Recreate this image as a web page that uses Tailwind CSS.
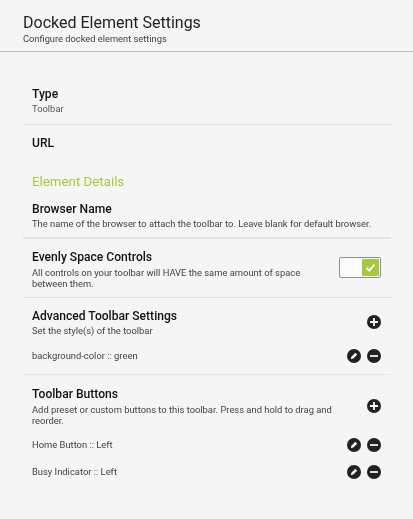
<!DOCTYPE html>
<html>
<head>
<meta charset="utf-8">
<script src="https://cdn.jsdelivr.net/npm/@tailwindcss/browser@4"></script>
</head>
<body class="m-0 bg-[#f5f5f5]">
<div class="w-[413px] h-[519px] overflow-hidden bg-[#f5f5f5] font-['Roboto',sans-serif] text-[#111] blur-[0.4px]">
  <header class="h-[52px] pl-[23px] pt-[13px] border-b border-[#bdbdbd]">
    <h1 class="text-[16px] leading-[19px] font-normal text-[#212121]">Docked Element Settings</h1>
    <p class="text-[9.3px] leading-[13px] text-[#424242]">Configure docked element settings</p>
  </header>
  <main class="pt-[35px] pl-[23px] w-[391px]">
    <section class="pl-[9px] h-[38px] border-b border-[#dedede]">
      <h2 class="text-[12.1px] leading-[15px] font-medium">Type</h2>
      <p class="text-[9.4px] leading-[14px] text-[#555]">Toolbar</p>
    </section>
    <section class="pl-[9px] pt-[11px] h-[40px]">
      <h2 class="text-[12.1px] leading-[15px] font-medium">URL</h2>
    </section>
    <section class="pl-[9px] pt-[7px]">
      <h3 class="text-[13.3px] leading-[20px] font-normal text-[#a4c93c]">Element Details</h3>
    </section>
    <section class="pl-[9px] pt-[10px] h-[47px] border-b-2 border-[#e6e6e6]">
      <h2 class="text-[12.1px] leading-[15px] font-medium">Browser Name</h2>
      <p class="text-[9.4px] leading-[14px] text-[#424242] whitespace-nowrap">The name of the browser to attach the toolbar to. Leave blank for default browser.</p>
    </section>
    <section class="pl-[9px] pt-[11px] h-[59px] border-b border-[#dedede] flex justify-between">
      <div class="w-[285px]">
        <h2 class="text-[12.1px] leading-[15px] font-medium">Evenly Space Controls</h2>
        <p class="text-[9.4px] leading-[11px] text-[#424242] mt-[2px]">All controls on your toolbar will HAVE the same amount of space between them.</p>
      </div>
      <div class="w-[42px] h-[21px] mt-[7px] mr-[10px] border border-[#8f8f8f] bg-[#fbfbfb] rounded-[2px] flex justify-end p-px">
        <div class="w-[17px] h-[17px] bg-[#a4c93c] rounded-[1px] flex items-center justify-center">
          <svg width="13" height="13" viewBox="0 0 13 13"><path d="M2.5 7l2.8 2.6L10.5 3.6" fill="none" stroke="#fff" stroke-width="2"/></svg>
        </div>
      </div>
    </section>
    <section class="pl-[9px] pr-[10px] pt-[11px] flex justify-between">
      <div>
        <h2 class="text-[12.1px] leading-[15px] font-medium">Advanced Toolbar Settings</h2>
        <p class="text-[9.4px] leading-[14px] text-[#424242]">Set the style(s) of the toolbar</p>
      </div>
      <svg class="mt-[6px]" width="14" height="14" viewBox="0 0 14 14"><circle cx="7" cy="7" r="7" fill="#212121"/><path d="M7 3v8M3 7h8" stroke="#f5f5f5" stroke-width="1.8"/></svg>
    </section>
    <div class="pl-[9px] pr-[10px] mt-[8px] h-[20px] flex justify-between items-center text-[9.4px] text-[#424242]">
      <span>background-color :: green</span>
      <div class="flex gap-[6px]">
        <svg width="14" height="14" viewBox="0 0 14 14"><circle cx="7" cy="7" r="7" fill="#212121"/><path d="M3.8 10.2l.6-2.5 3.9-3.9 1.9 1.9-3.9 3.9z" fill="#f5f5f5"/></svg>
        <svg width="14" height="14" viewBox="0 0 14 14"><circle cx="7" cy="7" r="7" fill="#212121"/><path d="M3 7h8" stroke="#f5f5f5" stroke-width="1.8"/></svg>
      </div>
    </div>
    <div class="border-b border-[#e6e6e6] mt-[8px]"></div>
    <section class="pl-[9px] pr-[10px] pt-[12px] flex justify-between">
      <div class="w-[312px]">
        <h2 class="text-[12.1px] leading-[15px] font-medium">Toolbar Buttons</h2>
        <p class="text-[9.4px] leading-[11px] text-[#424242] mt-[2px]">Add preset or custom buttons to this toolbar. Press and hold to drag and reorder.</p>
      </div>
      <svg class="mt-[12px]" width="14" height="14" viewBox="0 0 14 14"><circle cx="7" cy="7" r="7" fill="#212121"/><path d="M7 3v8M3 7h8" stroke="#f5f5f5" stroke-width="1.8"/></svg>
    </section>
    <div class="pl-[9px] pr-[10px] mt-[9px] h-[20px] flex justify-between items-center text-[9.4px] text-[#424242]">
      <span>Home Button :: Left</span>
      <div class="flex gap-[6px]">
        <svg width="14" height="14" viewBox="0 0 14 14"><circle cx="7" cy="7" r="7" fill="#212121"/><path d="M3.8 10.2l.6-2.5 3.9-3.9 1.9 1.9-3.9 3.9z" fill="#f5f5f5"/></svg>
        <svg width="14" height="14" viewBox="0 0 14 14"><circle cx="7" cy="7" r="7" fill="#212121"/><path d="M3 7h8" stroke="#f5f5f5" stroke-width="1.8"/></svg>
      </div>
    </div>
    <div class="pl-[9px] pr-[10px] mt-[7px] h-[20px] flex justify-between items-center text-[9.4px] text-[#424242]">
      <span>Busy Indicator :: Left</span>
      <div class="flex gap-[6px]">
        <svg width="14" height="14" viewBox="0 0 14 14"><circle cx="7" cy="7" r="7" fill="#212121"/><path d="M3.8 10.2l.6-2.5 3.9-3.9 1.9 1.9-3.9 3.9z" fill="#f5f5f5"/></svg>
        <svg width="14" height="14" viewBox="0 0 14 14"><circle cx="7" cy="7" r="7" fill="#212121"/><path d="M3 7h8" stroke="#f5f5f5" stroke-width="1.8"/></svg>
      </div>
    </div>
  </main>
</div>
</body>
</html>
